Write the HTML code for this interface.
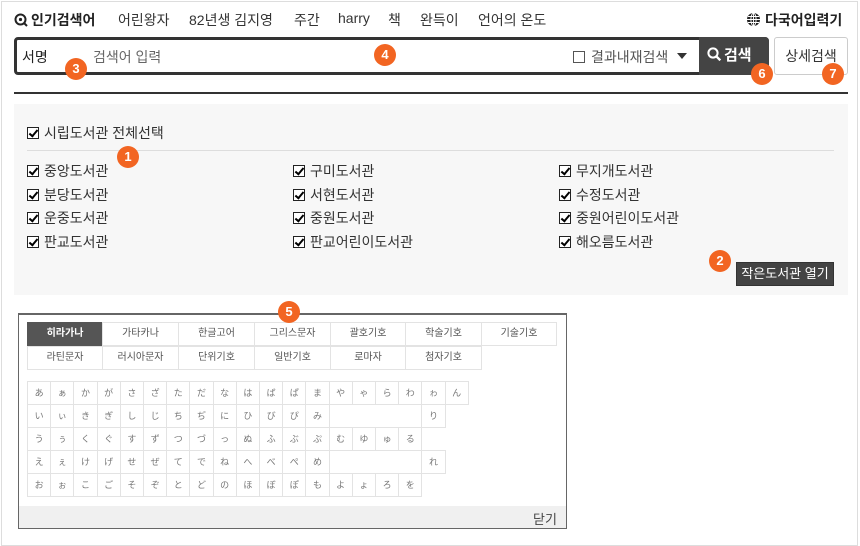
<!DOCTYPE html>
<html><head><meta charset="utf-8"><style>
*{box-sizing:border-box;margin:0;padding:0}
body{width:860px;height:546px;background:#fff;font-family:"Liberation Sans","Noto Sans CJK KR",sans-serif;color:#222;position:relative;overflow:hidden}
.a{position:absolute;white-space:nowrap}
.frame{left:1px;top:1px;width:857px;height:545px;border:1px solid #ddd}
.nav{top:10px;font-size:14px;color:#333}
.badge{position:absolute;width:22px;height:22px;border-radius:50%;background:#f26522;color:#fff;font-size:13px;font-weight:bold;text-align:center;line-height:22px}
.cb{display:inline-block;width:12px;height:12px;border:1px solid #222;vertical-align:-1px;margin-right:5px;position:relative;background:#fff}
.cb.on::after{content:"";position:absolute;left:3px;top:0px;width:3px;height:7px;border:solid #000;border-width:0 2px 2px 0;transform:rotate(40deg)}
.lib{font-size:14px;color:#333}
.tab{position:absolute;height:24px;border:1px solid #e3e3e3;font-size:10px;color:#555;text-align:center;line-height:22px;background:#fff}
.cell{position:absolute;width:24.2px;height:24px;border:1px solid #e3e3e3;font-size:9px;color:#777;text-align:center;line-height:22px;background:#fff}
</style></head><body>
<div class="a frame"></div>

<div class="a nav" style="left:14px;font-weight:bold;color:#222"><svg width="14" height="14" viewBox="0 0 14 14" style="vertical-align:-2px;margin-right:3px"><circle cx="6.5" cy="6.5" r="5" fill="none" stroke="#222" stroke-width="2"/><circle cx="6.5" cy="6.5" r="1.6" fill="#222"/><path d="M10 10l3 3" stroke="#222" stroke-width="2"/></svg>인기검색어</div>
<div class="a nav" style="left:118px">어린왕자</div>
<div class="a nav" style="left:189px">82년생 김지영</div>
<div class="a nav" style="left:294px">주간</div>
<div class="a nav" style="left:338px">harry</div>
<div class="a nav" style="left:388px">책</div>
<div class="a nav" style="left:420px">완득이</div>
<div class="a nav" style="left:478px">언어의 온도</div>
<div class="a nav" style="left:746px;font-weight:bold;color:#222"><svg width="15" height="15" viewBox="0 0 15 15" style="vertical-align:-2px;margin-right:4px"><circle cx="7.5" cy="7.5" r="6.5" fill="#222"/><g stroke="#fff" stroke-width="0.9" fill="none"><ellipse cx="7.5" cy="7.5" rx="2.6" ry="6.3"/><path d="M1 7.5h13M2 4.5h11M2 10.5h11M7.5 1v13"/></g></svg>다국어입력기</div>

<div class="a" style="left:14px;top:37px;width:755px;height:38px;border:3px solid #333;border-radius:4px;background:#fff"></div>
<div class="a" style="left:22px;top:47px;font-size:14px;color:#222">서명</div>
<div class="a" style="left:93px;top:47px;font-size:14px;color:#666">검색어 입력</div>
<div class="a" style="left:573px;top:47px;font-size:14px;color:#555"><span style="display:inline-block;width:12px;height:12px;border:1px solid #555;vertical-align:-1px;margin-right:6px"></span>결과내재검색</div>
<div class="a" style="left:677px;top:53px;width:0;height:0;border-left:5px solid transparent;border-right:5px solid transparent;border-top:6px solid #333"></div>
<div class="a" style="left:699px;top:37px;width:70px;height:38px;background:#444;border-radius:0 4px 4px 0;color:#fff;font-size:15px;font-weight:bold;line-height:38px;padding-left:8px"><svg width="15" height="15" viewBox="0 0 15 15" style="vertical-align:-2px;margin-right:2px"><circle cx="6" cy="6" r="4.6" fill="none" stroke="#fff" stroke-width="2"/><path d="M9.3 9.3l4 4" stroke="#fff" stroke-width="2.4"/></svg>검색</div>
<div class="a" style="left:774px;top:37px;width:74px;height:38px;border:1px solid #ccc;border-radius:3px;font-size:14px;color:#333;text-align:center;line-height:36px">상세검색</div>

<div class="a" style="left:14px;top:92px;width:834px;height:2px;background:#333"></div>

<div class="a" style="left:14px;top:104px;width:834px;height:191px;background:#f7f7f7"></div>
<div class="a lib" style="left:27px;top:123px"><span class="cb on"></span>시립도서관 전체선택</div>
<div class="a" style="left:27px;top:150px;width:807px;height:1px;background:#ddd"></div>
<div class="a lib" style="left:27px;top:161px"><span class="cb on"></span>중앙도서관</div>
<div class="a lib" style="left:27px;top:185px"><span class="cb on"></span>분당도서관</div>
<div class="a lib" style="left:27px;top:208px"><span class="cb on"></span>운중도서관</div>
<div class="a lib" style="left:27px;top:232px"><span class="cb on"></span>판교도서관</div>
<div class="a lib" style="left:293px;top:161px"><span class="cb on"></span>구미도서관</div>
<div class="a lib" style="left:293px;top:185px"><span class="cb on"></span>서현도서관</div>
<div class="a lib" style="left:293px;top:208px"><span class="cb on"></span>중원도서관</div>
<div class="a lib" style="left:293px;top:232px"><span class="cb on"></span>판교어린이도서관</div>
<div class="a lib" style="left:559px;top:161px"><span class="cb on"></span>무지개도서관</div>
<div class="a lib" style="left:559px;top:185px"><span class="cb on"></span>수정도서관</div>
<div class="a lib" style="left:559px;top:208px"><span class="cb on"></span>중원어린이도서관</div>
<div class="a lib" style="left:559px;top:232px"><span class="cb on"></span>해오름도서관</div>
<div class="a" style="left:736px;top:262px;width:98px;height:24px;background:#444;border:1px solid #333;color:#fff;font-size:13px;text-align:center;line-height:22px">작은도서관 열기</div>

<div class="a" style="left:18px;top:313px;width:549px;height:216px;border:1px solid #666;border-top-width:2px;background:#fff"></div>
<div class="a" style="left:19px;top:506px;width:547px;height:22px;background:#f0f0f0"></div>
<div class="a" style="left:533px;top:509px;font-size:13px;color:#444">닫기</div>
<div id="kb"></div>

<div class="badge" style="left:117px;top:146px">1</div>
<div class="badge" style="left:709px;top:250px">2</div>
<div class="badge" style="left:65px;top:58px">3</div>
<div class="badge" style="left:374px;top:44px">4</div>
<div class="badge" style="left:278px;top:301px">5</div>
<div class="badge" style="left:751px;top:63px">6</div>
<div class="badge" style="left:822px;top:63px">7</div>

<script>
(function(){
var h='';
var t1=['히라가나','가타카나','한글고어','그리스문자','괄호기호','학술기호','기술기호'];
var t2=['라틴문자','러시아문자','단위기호','일반기호','로마자','첨자기호'];
var xs=[27,102,178,254,330,405,481,556];
t1.forEach(function(s,i){var on=i==0;h+='<div class="tab" style="left:'+xs[i]+'px;top:322px;width:'+(xs[i+1]-xs[i]+1)+'px;'+(on?'background:#555;color:#fff;font-weight:bold;border-color:#555':'')+'">'+s+'</div>';});
t2.forEach(function(s,i){h+='<div class="tab" style="left:'+xs[i]+'px;top:346px;width:'+(xs[i+1]-xs[i]+1)+'px">'+s+'</div>';});
var W=23.2;
var rows=['あぁかがさざただなはばぱまやゃらわゎん','いぃきぎしじちぢにひびぴみ____り','うぅくぐすずつづっぬふぶぷむゆゅる','えぇけげせぜてでねへべぺめ____れ','おぉこごそぞとどのほぼぽもよょろを'];
rows.forEach(function(r,ri){var y=381+ri*23;var chars=Array.from(r);
 for(var k=0;k<chars.length;k++){var c=chars[k];
  if(c=='_'){h+='<div class="cell" style="left:'+(27+k*W)+'px;top:'+y+'px;width:'+(4*W+1)+'px"></div>';k+=3;continue;}
  h+='<div class="cell" style="left:'+(27+k*W)+'px;top:'+y+'px">'+c+'</div>';}
});
document.getElementById('kb').innerHTML=h;
})();
</script>
</body></html>
